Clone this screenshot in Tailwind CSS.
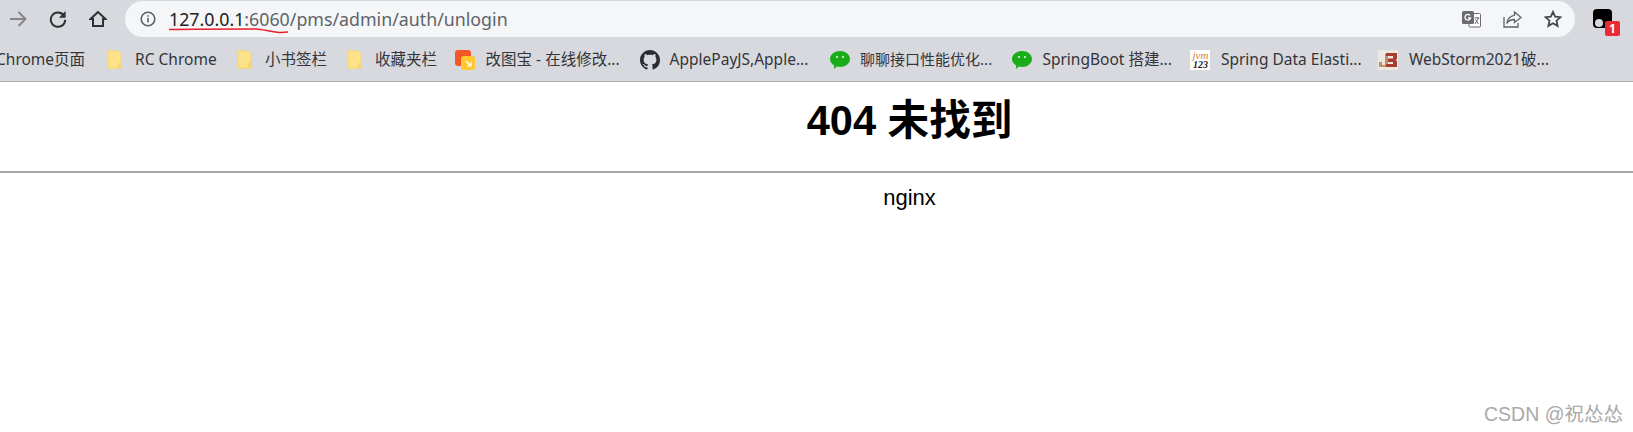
<!DOCTYPE html>
<html lang="zh">
<head>
<meta charset="utf-8">
<title>404 未找到</title>
<script src="https://cdn.jsdelivr.net/npm/@tailwindcss/browser@4"></script>
</head>
<body class="bg-white overflow-hidden">
<div class="relative w-[1633px] h-[432px] overflow-hidden font-['Liberation_Sans','Noto_Sans_CJK_SC',sans-serif] text-black">
  <header class="h-[82px] bg-[#d8d9de] border-b border-[#b0b1b5] font-['Noto_Sans','Noto_Sans_CJK_SC',sans-serif]">
    <div class="h-[37px] flex items-start pt-px">
      <div class="w-[125px] h-[36px] flex items-center pl-[9px] shrink-0">
        <svg class="w-[18px] h-[18px] mr-[22px]" viewBox="0 0 18 18" fill="none" stroke="#85868a" stroke-width="2"><path d="M1 9h15M9.500 2l7 7-7 7"/></svg>
        <svg class="w-[18px] h-[18px] mr-[22px]" viewBox="0 0 20 20" fill="none" stroke="#2f3033" stroke-width="2.200"><path d="M16.500 6A8 8 0 1 0 18 11"/><path d="M18.500 1v7.500H11z" fill="#2f3033" stroke="none"/></svg>
        <svg class="w-[18px] h-[18px]" viewBox="0 0 18 18" fill="none" stroke="#2f3033" stroke-width="2"><path d="M9 2 1.500 9H4v7h10V9h2.500z"/></svg>
      </div>
      <div class="w-[1450px] h-[36px] rounded-full bg-[#f5f6f8] flex items-center pl-[15px] pr-[13px] shrink-0">
        <svg class="w-[16px] h-[16px] mr-[13px] shrink-0" viewBox="0 0 16 16" fill="none" stroke="#5f6165" stroke-width="1.600"><circle cx="8" cy="8" r="6.800"/><path d="M8 7v4.500M8 4.200v1.600"/></svg>
        <div class="text-[17.800px] leading-[24px] text-[#5f6368] whitespace-nowrap"><span class="text-[#202124]">127.0.0.1</span>:6060/pms/admin/auth/unlogin</div>
        <div class="ml-auto flex items-center gap-[22px]">
          <svg class="w-[19px] h-[18px]" viewBox="0 0 19 18"><rect x="7" y="3.500" width="11.500" height="13.500" rx="1" fill="#fff" stroke="#6b6c70"/><rect x="0" y="1" width="12" height="13" rx="1.500" fill="#6b6c70"/><path d="M8 5.500A2.800 2.800 0 1 0 8.500 8H6" fill="none" stroke="#fff" stroke-width="1.300"/><path d="M12.500 8h5M15 7v1M13 14l3.500-6M13.500 9.500l3 4.500" stroke="#6b6c70" fill="none"/></svg>
          <svg class="w-[19px] h-[18px]" viewBox="0 0 19 18" fill="none" stroke="#5f6165" stroke-width="1.300"><path d="M1 7v10h14v-4"/><path d="M11.500 2l6.500 5.500-6.500 5V9.500C8 9.500 5.500 10.800 3.800 13.500 4.400 9 7 6 11.500 5.300z"/></svg>
          <svg class="w-[18px] h-[18px]" viewBox="0 0 18 18" fill="none" stroke="#45464a" stroke-width="1.800"><path d="M9 1.800l2.200 4.800 5.200.6-3.900 3.500 1.100 5.200L9 13.200l-4.600 2.700 1.100-5.200-3.900-3.500 5.200-.6z"/></svg>
        </div>
      </div>
      <div class="relative w-[19px] h-[19px] ml-[18px] mt-[8px] bg-black rounded-[4px] shrink-0">
        <span class="absolute left-[2px] bottom-[1px] w-[8px] h-[8px] rounded-full bg-[#d8d9de]"></span>
        <span class="absolute left-[12px] top-[12px] w-[15px] h-[15px] rounded-[2px] bg-[#ea2b35] text-white text-[12px] leading-[15px] font-bold text-center">1</span>
      </div>
    </div>
    <nav class="h-[44px] flex items-center pt-px text-[15.500px] text-[#33353a] whitespace-nowrap ml-[-4px]">
      <span class="w-[108.600px] shrink-0">Chrome页面</span>
      <div class="w-[130px] flex items-center gap-[10.500px] shrink-0">
        <div class="w-[20px] flex justify-center"><svg class="w-[15px] h-[19px]" viewBox="0 0 15 19"><path d="M1 .8h9.500l3.500 3.500v13.900H1z" fill="#fde28a" stroke="#f4d671"/><path d="M11 13h3v5h-3z" fill="#f4d671"/></svg></div><span>RC Chrome</span>
      </div>
      <div class="w-[110px] flex items-center gap-[10.500px] shrink-0">
        <div class="w-[20px] flex justify-center"><svg class="w-[15px] h-[19px]" viewBox="0 0 15 19"><path d="M1 .8h9.500l3.500 3.500v13.900H1z" fill="#fde28a" stroke="#f4d671"/><path d="M11 13h3v5h-3z" fill="#f4d671"/></svg></div><span>小书签栏</span>
      </div>
      <div class="w-[110.500px] flex items-center gap-[10.500px] shrink-0">
        <div class="w-[20px] flex justify-center"><svg class="w-[15px] h-[19px]" viewBox="0 0 15 19"><path d="M1 .8h9.500l3.500 3.500v13.900H1z" fill="#fde28a" stroke="#f4d671"/><path d="M11 13h3v5h-3z" fill="#f4d671"/></svg></div><span>收藏夹栏</span>
      </div>
      <div class="w-[184.500px] flex items-center gap-[10.500px] shrink-0">
        <svg class="w-[20px] h-[20px]" viewBox="0 0 20 20"><rect width="16" height="16" rx="3" fill="#f4562a"/><rect x="6" y="6" width="14" height="14" rx="3" fill="#fdc92f"/><path d="M11 11l5 5M16 12v4h-4" fill="none" stroke="#fff" stroke-width="1.200"/></svg><span>改图宝 - 在线修改...</span>
      </div>
      <div class="w-[190.500px] flex items-center gap-[10px] shrink-0">
        <svg class="w-[20px] h-[20px]" viewBox="0 0 16 16" fill="#2a2c31"><path d="M8 0C3.58 0 0 3.58 0 8c0 3.54 2.29 6.53 5.47 7.59.4.07.55-.17.55-.38 0-.19-.01-.82-.01-1.49-2.01.37-2.53-.49-2.69-.94-.09-.23-.48-.94-.82-1.13-.28-.15-.68-.52-.01-.53.63-.01 1.08.58 1.23.82.72 1.21 1.87.87 2.33.66.07-.52.28-.87.51-1.07-1.78-.2-3.64-.89-3.64-3.95 0-.87.31-1.59.82-2.15-.08-.2-.36-1.02.08-2.12 0 0 .67-.21 2.2.82.64-.18 1.32-.27 2-.27s1.36.09 2 .27c1.53-1.04 2.2-.82 2.2-.82.44 1.1.16 1.92.08 2.12.51.56.82 1.27.82 2.15 0 3.07-1.87 3.75-3.65 3.95.29.25.54.73.54 1.48 0 1.07-.01 1.93-.01 2.2 0 .21.15.46.55.38A8.01 8.01 0 0 0 16 8c0-4.42-3.58-8-8-8z"/></svg><span>ApplePayJS,Apple...</span>
      </div>
      <div class="w-[182.300px] flex items-center gap-[10px] shrink-0">
        <svg class="w-[20px] h-[20px]" viewBox="0 0 20 20"><path d="M10 1c5.300 0 10 3.400 10 8s-4.700 8-10 8c-1.100 0-2.100-.1-3-.4L3.800 19l.4-3.500C1.800 14 0 11.700 0 9c0-4.600 4.700-8 10-8z" fill="#1aad19"/><circle cx="7" cy="7" r="1.100" fill="#dff3df"/><circle cx="13" cy="7" r="1.100" fill="#dff3df"/></svg><span class="text-[15px]">聊聊接口性能优化...</span>
      </div>
      <div class="w-[178px] flex items-center gap-[10px] shrink-0">
        <svg class="w-[20px] h-[20px]" viewBox="0 0 20 20"><path d="M10 1c5.300 0 10 3.400 10 8s-4.700 8-10 8c-1.100 0-2.100-.1-3-.4L3.800 19l.4-3.500C1.800 14 0 11.700 0 9c0-4.600 4.700-8 10-8z" fill="#1aad19"/><circle cx="7" cy="7" r="1.100" fill="#dff3df"/><circle cx="13" cy="7" r="1.100" fill="#dff3df"/></svg><span>SpringBoot 搭建...</span>
      </div>
      <div class="w-[188px] flex items-center gap-[10.500px] shrink-0">
        <div class="w-[20px] h-[20px] bg-white flex flex-col items-center justify-between font-['Liberation_Serif',serif] overflow-hidden">
          <span class="text-[11px] leading-[10px] italic text-[#d9822b]">jvm</span><span class="text-[10px] leading-[10px] font-bold italic text-[#222]">123</span>
        </div><span>Spring Data Elasti...</span>
      </div>
      <div class="flex items-center gap-[10.500px] shrink-0">
        <svg class="w-[20px] h-[20px]" viewBox="0 0 20 20"><rect width="20" height="20" fill="#ebe7e3"/><path d="M1 12h3v3h3V4h3v13H1z" fill="#c09060"/><path d="M8 3h11v6l-1.500 1 1.500 1v6H8v-3h7v-2h-5V8.500h5V6H8z" fill="#a83c30"/></svg><span>WebStorm2021破...</span>
      </div>
    </nav>
  </header>
  <main class="w-[1819px]">
    <h1 class="text-center font-bold text-[41.600px] leading-[48px] pt-[15px] pb-[26px]">404 未找到</h1>
    <hr class="border-0 h-[2px] bg-[#a4a4a4]">
    <p class="text-center text-[22px] leading-[24px] pt-[13px]">nginx</p>
  </main>
  <svg class="absolute left-[169px] top-[27px] w-[119px] h-[8px]" viewBox="0 0 121 8" fill="none" stroke="#e8202c" stroke-width="1.600"><path d="M0 2.500C30 2 60 2 88 2c8 0 14 3 24 3.500 4 0 6-.5 9-.5"/></svg>
  <div class="absolute right-[10px] top-[403px] text-[19.500px] leading-[22px] text-[#a9a9a9]">CSDN @祝怂怂</div>
</div>
</body>
</html>
